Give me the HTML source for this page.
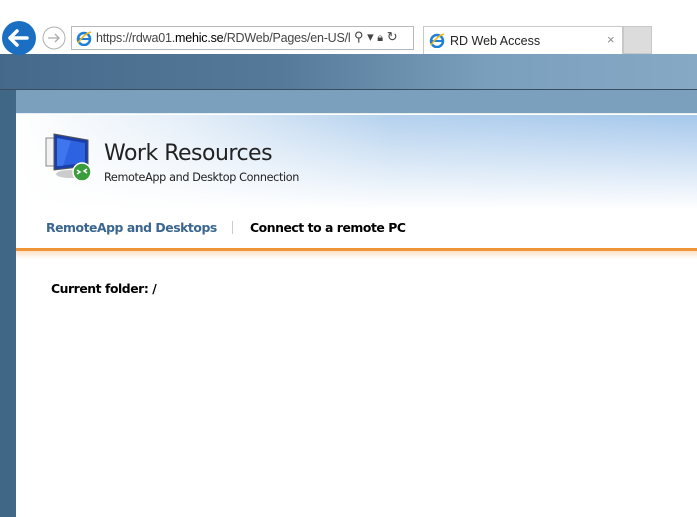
<!DOCTYPE html>
<html><head><meta charset="utf-8"><style>
*{margin:0;padding:0;box-sizing:border-box}
body{width:697px;height:517px;overflow:hidden;position:relative;background:#fff;font-family:"Liberation Sans",sans-serif}
.bg{position:absolute;left:0;top:54px;width:697px;height:463px;background:linear-gradient(90deg,#3f6786 0%,#4d7090 30%,#6f93b2 70%,#85a8c5 100%)}
.bgtop{position:absolute;left:0;top:54px;width:697px;height:36px;background:linear-gradient(90deg,#45698a,#557a99 40%,#7a9fbd 70%,#86a9c5);border-bottom:1px solid #3a4d5e}
.panel{position:absolute;left:16px;top:90px;width:681px;height:427px;background:#fff}
.pbar{position:absolute;left:0;top:0;width:100%;height:24px;background:#7aa0bd;border-bottom:1px solid #e6eef4}
.hdr{position:absolute;left:0;top:25px;width:100%;height:95px;background:linear-gradient(180deg,rgba(255,255,255,0) 0%,#fff 100%),linear-gradient(90deg,#fff 0%,#e4eef8 25%,#b4d1ee 55%,#a6c8ec 100%)}
.t1{position:absolute;left:88px;top:51px;font-size:22px;color:#222;font-family:"DejaVu Sans","Liberation Sans",sans-serif;letter-spacing:-0.5px}
.t2{position:absolute;left:88px;top:81px;font-size:11.2px;color:#222;font-family:"DejaVu Sans",sans-serif;letter-spacing:-0.35px}
.nav{position:absolute;top:130px;font-size:12.4px;font-weight:bold;font-family:"DejaVu Sans",sans-serif;letter-spacing:-0.45px}
.orange{position:absolute;left:0;top:158px;width:100%;height:3px;background:#f0943a}
.ofade{position:absolute;left:0;top:161px;width:100%;height:8px;background:linear-gradient(#fbe2c6,#fff)}
.cf{position:absolute;left:35px;top:191px;font-size:12.4px;font-weight:bold;font-family:"DejaVu Sans",sans-serif;letter-spacing:-0.45px}
.addr{position:absolute;left:71px;top:26px;width:343px;height:24px;border:1px solid #b8b8b8;background:#fff}
.tab{position:absolute;left:423px;top:26px;width:200px;height:28px;border:1px solid #c8c8c8;border-bottom:none;background:#fff}
.newtab{position:absolute;left:623px;top:26px;width:29px;height:28px;background:#dcdcdc;border:1px solid #c8c8c8}
</style></head><body>
<div class="bg"></div><div class="bgtop"></div>
<svg style="position:absolute;left:0;top:21px" width="70" height="34">
<circle cx="19" cy="17" r="17" fill="#1b6fc2"/>
<path d="M10 17h17M17 10l-7 7 7 7" stroke="#fff" stroke-width="3.5" fill="none" stroke-linecap="round" stroke-linejoin="round"/>
<circle cx="54" cy="17" r="11" fill="#fff" stroke="#b0b0b0"/>
<path d="M48 17h11M55 13l4 4-4 4" stroke="#aaa" stroke-width="1.3" fill="none"/>
</svg>
<div class="addr">
<svg style="position:absolute;left:4px;top:3px" width="16" height="16"><circle cx="8" cy="9" r="6" fill="none" stroke="#1e7fd6" stroke-width="2.5"/><path d="M3 9h10" stroke="#1e7fd6" stroke-width="2"/><path d="M2 13c4-6 9-10 13-11" stroke="#f2b51a" stroke-width="1.5" fill="none"/></svg>
<div style="position:absolute;left:24px;top:4px;font-size:12.5px;color:#444;letter-spacing:-0.2px;white-space:nowrap">https://rdwa01.<span style="color:#000">mehic.se</span>/RDWeb/Pages/en-US/l</div>
<div style="position:absolute;left:282px;top:2px;font-size:13px;color:#444">⚲ ▾ <span style="font-size:11px">🔒︎</span> ↻</div>
</div>
<div class="tab">
<svg style="position:absolute;left:5px;top:5px" width="16" height="16"><circle cx="8" cy="9" r="6" fill="none" stroke="#1e7fd6" stroke-width="2.5"/><path d="M3 9h10" stroke="#1e7fd6" stroke-width="2"/><path d="M2 13c4-6 9-10 13-11" stroke="#f2b51a" stroke-width="1.5" fill="none"/></svg>
<div style="position:absolute;left:26px;top:7px;font-size:12.5px;color:#222">RD Web Access</div>
<div style="position:absolute;left:183px;top:5px;font-size:13px;color:#888">×</div>
</div>
<div class="newtab"></div>
<div class="panel">
<div class="pbar"></div>
<div class="hdr"></div>
<svg style="position:absolute;left:28px;top:42px" width="50" height="54">
<rect x="2" y="6" width="20" height="28" fill="#f2f2f2" stroke="#888"/>
<path d="M10 2l34 6v26l-34 4z" fill="#1b3fa8" stroke="#555"/>
<path d="M13 6l28 5v20l-28 3z" fill="#2d62e0"/>
<path d="M13 6l14 3-8 25-6 0z" fill="#4a84f5" opacity=".6"/>
<ellipse cx="26" cy="42" rx="14" ry="4" fill="#ccc"/>
<circle cx="38" cy="40" r="9" fill="#3a9c3a" stroke="#fff" stroke-width="1.5"/>
<path d="M33 38l3 2-3 2M43 37l-3 2 3 2" stroke="#fff" stroke-width="1.5" fill="none"/>
</svg>
<div class="t1">Work Resources</div>
<div class="t2">RemoteApp and Desktop Connection</div>
<div class="nav" style="left:30px;color:#3a6690">RemoteApp and Desktops</div>
<div style="position:absolute;left:216px;top:131px;width:1px;height:13px;background:#ccc"></div>
<div class="nav" style="left:234px;color:#000">Connect to a remote PC</div>
<div class="orange"></div><div class="ofade"></div>
<div class="cf">Current folder: /</div>
</div>
</body></html>
